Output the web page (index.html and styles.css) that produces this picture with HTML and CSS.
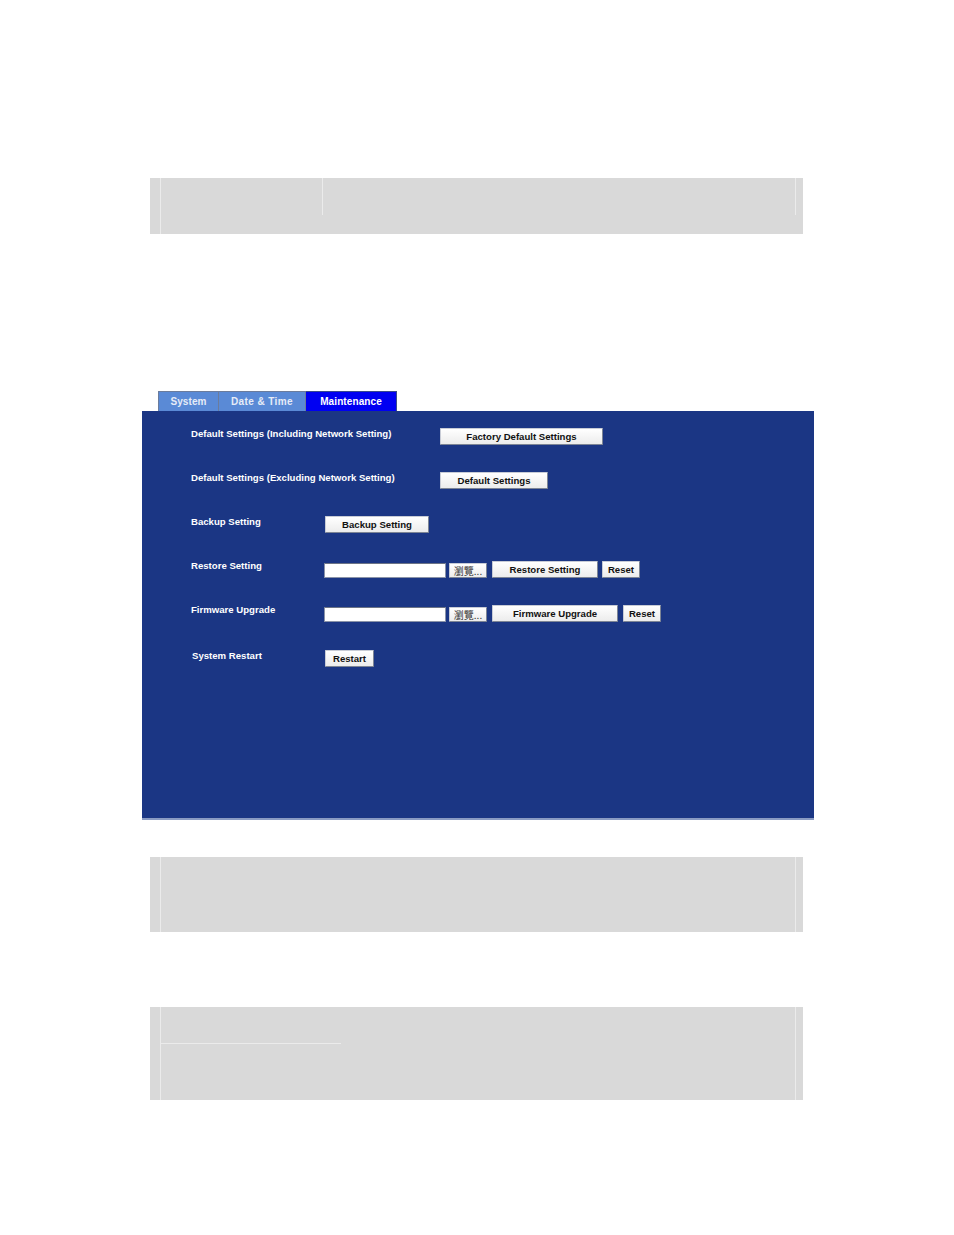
FILE: index.html
```html
<!DOCTYPE html>
<html>
<head>
<meta charset="utf-8">
<title>Maintenance</title>
<link rel="stylesheet" href="styles.css">
</head>
<body>
<div class="page">
  <div class="gbox gbox-top">
    <div class="gmain">
      <div class="grow">
        <div class="gcell gcell-a"></div>
        <div class="gcell gcell-b"></div>
      </div>
    </div>
  </div>

  <div class="ui">
    <div class="tabs">
      <div class="tab tab-system">System</div>
      <div class="tab tab-date">Date &amp; Time</div>
      <div class="tab tab-active">Maintenance</div>
    </div>
    <div class="panel">
      <div class="row">
        <div class="label label-wide">Default Settings (Including Network Setting)</div>
        <button class="btn btn-factory">Factory Default Settings</button>
      </div>
      <div class="row">
        <div class="label label-wide">Default Settings (Excluding Network Setting)</div>
        <button class="btn btn-default">Default Settings</button>
      </div>
      <div class="row">
        <div class="label">Backup Setting</div>
        <button class="btn btn-backup">Backup Setting</button>
      </div>
      <div class="row">
        <div class="label">Restore Setting</div>
        <div class="file-input"></div>
        <button class="btn btn-browse">瀏覽...</button>
        <button class="btn btn-restore">Restore Setting</button>
        <button class="btn btn-reset">Reset</button>
      </div>
      <div class="row">
        <div class="label">Firmware Upgrade</div>
        <div class="file-input"></div>
        <button class="btn btn-browse">瀏覽...</button>
        <button class="btn btn-firmware">Firmware Upgrade</button>
        <button class="btn btn-reset btn-reset2">Reset</button>
      </div>
      <div class="row row-last">
        <div class="label label-restart">System Restart</div>
        <button class="btn btn-restart">Restart</button>
      </div>
    </div>
  </div>

  <div class="gbox gbox-mid">
    <div class="gmain gmain-full"></div>
  </div>

  <div class="gbox gbox-bottom">
    <div class="gmain gmain-full">
      <div class="gcell-corner"></div>
    </div>
  </div>
</div>
</body>
</html>
```

FILE: styles.css
```css
* {
  box-sizing: border-box;
}

html, body {
  margin: 0;
  padding: 0;
  background: #ffffff;
}

body {
  font-family: "Liberation Sans", Arial, sans-serif;
  width: 954px;
  height: 1235px;
  overflow: hidden;
}

.page {
  padding-top: 178px;
}

/* gray placeholder boxes */
.gbox {
  margin-left: 150px;
  width: 653px;
  background: #d9d9d9;
  padding-left: 10px;
  padding-right: 7px;
  display: flex;
}

.gmain {
  flex: 1;
  border-left: 1px solid #ebebeb;
}

.gmain-full {
  border-right: 1px solid #ebebeb;
}

.gbox-top {
  height: 56px;
}

.grow {
  display: flex;
  height: 37px;
}

.gcell-a {
  width: 162px;
  border-right: 1px solid #ebebeb;
}

.gcell-b {
  flex: 1;
  border-right: 1px solid #ebebeb;
}

.gbox-mid {
  margin-top: 37px;
  height: 75px;
}

.gbox-bottom {
  margin-top: 75px;
  height: 93px;
}

.gcell-corner {
  width: 180px;
  height: 37px;
  border-bottom: 1px solid #ebebeb;
}

/* maintenance UI */
.ui {
  margin-top: 157px;
  margin-left: 142px;
  width: 672px;
}

.tabs {
  display: flex;
  padding-left: 16px;
  height: 20px;
}

.tab {
  height: 20px;
  line-height: 20px;
  font-size: 10px;
  font-weight: bold;
  text-align: center;
  color: #e6ecf7;
  background: #5a8ad6;
  border: 1px solid #6b7c9c;
  border-bottom: none;
  letter-spacing: 0.1px;
}

.tab + .tab {
  border-left: none;
}

.tab-system {
  width: 61px;
}

.tab-date {
  width: 87px;
  letter-spacing: 0.4px;
}

.tab-active {
  width: 91px;
  background: #0000f2;
  color: #ffffff;
  border-color: #3a4a8a;
}

.panel {
  height: 409px;
  background: #1b3684;
  border-bottom: 2px solid #8a9bc3;
  padding-top: 17px;
  padding-left: 49px;
}

.row {
  display: flex;
  align-items: flex-start;
  height: 44px;
}

.label {
  width: 133px;
  flex: none;
  color: #ffffff;
  font-size: 9.6px;
  font-weight: bold;
  line-height: 12px;
  white-space: nowrap;
}

.label-wide {
  width: 249px;
}

.label-restart {
  padding-left: 1px;
  padding-top: 2px;
}

.btn {
  flex: none;
  height: 17px;
  padding: 0;
  margin: 0;
  font-family: "Liberation Sans", Arial, sans-serif;
  font-size: 9.6px;
  font-weight: bold;
  color: #111111;
  line-height: 14px;
  background: linear-gradient(#ffffff, #ececec);
  border: 1px solid #7d8595;
  border-top-color: #c8ccd6;
  border-left-color: #c8ccd6;
  border-radius: 1px;
  text-align: center;
}

.btn-factory {
  width: 163px;
}

.btn-default {
  width: 108px;
}

.btn-backup {
  width: 104px;
  margin-left: 1px;
}

.file-input {
  flex: none;
  width: 122px;
  height: 15px;
  margin-top: 3px;
  background: #ffffff;
  border: 1px solid #8a93a8;
  border-top-color: #6c7486;
}

.btn-browse {
  width: 38px;
  height: 15px;
  margin-top: 3px;
  margin-left: 3px;
  font-family: "Noto Sans CJK TC", "Noto Sans CJK SC", sans-serif;
  font-weight: normal;
  font-size: 10px;
  line-height: 11px;
  color: #333333;
  white-space: nowrap;
  overflow: hidden;
}

.btn-restore {
  width: 106px;
  margin-left: 5px;
  margin-top: 1px;
}

.btn-firmware {
  width: 126px;
  margin-left: 5px;
  margin-top: 1px;
}

.btn-reset {
  width: 38px;
  margin-left: 4px;
  margin-top: 1px;
}

.btn-reset2 {
  margin-left: 5px;
}

.btn-restart {
  width: 49px;
  margin-left: 1px;
  margin-top: 2px;
}
```
